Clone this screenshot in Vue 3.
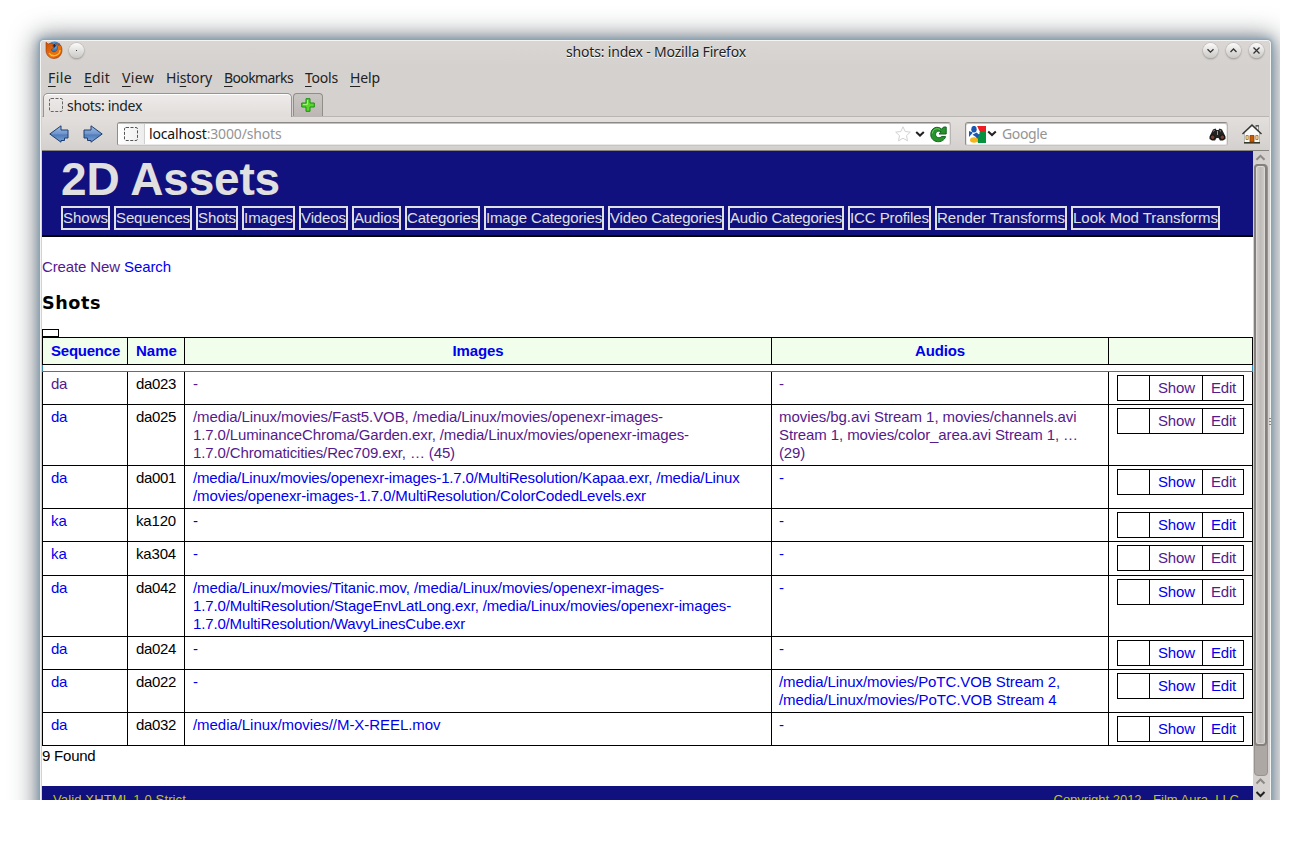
<script setup>
const fitText = (el, { value }) => {
  const chars = el.textContent.trim().length
  el.style.letterSpacing = '0px'
  const natural = el.getBoundingClientRect().width
  el.style.letterSpacing = `${(value - natural) / Math.max(1, chars)}px`
}
const vFit = { mounted: fitText }

const menus = [
  { pre: '', key: 'F', post: 'ile', w: 24, box: 36 },
  { pre: '', key: 'E', post: 'dit', w: 26, box: 38 },
  { pre: '', key: 'V', post: 'iew', w: 32, box: 44 },
  { pre: 'Hi', key: 's', post: 'tory', w: 46, box: 58 },
  { pre: '', key: 'B', post: 'ookmarks', w: 69, box: 81 },
  { pre: '', key: 'T', post: 'ools', w: 33, box: 45 },
  { pre: '', key: 'H', post: 'elp', w: 30, box: 40 },
]
const nav = [
  ['Shows', 49], ['Sequences', 78], ['Shots', 42], ['Images', 53], ['Videos', 49],
  ['Audios', 49], ['Categories', 75], ['Image Categories', 120], ['Video Categories', 116],
  ['Audio Categories', 116], ['ICC Profiles', 83], ['Render Transforms', 132], ['Look Mod Transforms', 149],
]
const none = [['-', 5]]
const rows = [
  { seq: 'da', seqSeen: true, name: 'da023', images: none, audios: none, seen: true, show: true, edit: true, h: 33 },
  { seq: 'da', name: 'da025', seen: true, show: true, edit: true, h: 61,
    images: [['/media/Linux/movies/Fast5.VOB, /media/Linux/movies/openexr-images-', 470], ['1.7.0/LuminanceChroma/Garden.exr, /media/Linux/movies/openexr-images-', 496], ['1.7.0/Chromaticities/Rec709.exr, … (45)', 262]],
    audios: [['movies/bg.avi Stream 1, movies/channels.avi', 297.5], ['Stream 1, movies/color_area.avi Stream 1, …', 299], ['(29)', 26]] },
  { seq: 'da', name: 'da001', edit: true, h: 43, audios: none,
    images: [['/media/Linux/movies/openexr-images-1.7.0/MultiResolution/Kapaa.exr, /media/Linux', 546.5], ['/movies/openexr-images-1.7.0/MultiResolution/ColorCodedLevels.exr', 453]] },
  { seq: 'ka', name: 'ka120', images: none, audios: none, h: 33 },
  { seq: 'ka', name: 'ka304', images: none, audios: none, show: true, edit: true, h: 34 },
  { seq: 'da', name: 'da042', edit: true, h: 61, audios: none,
    images: [['/media/Linux/movies/Titanic.mov, /media/Linux/movies/openexr-images-', 471], ['1.7.0/MultiResolution/StageEnvLatLong.exr, /media/Linux/movies/openexr-images-', 538], ['1.7.0/MultiResolution/WavyLinesCube.exr', 272]] },
  { seq: 'da', name: 'da024', images: none, audios: none, h: 33 },
  { seq: 'da', name: 'da022', images: none, h: 43,
    audios: [['/media/Linux/movies/PoTC.VOB Stream 2,', 281], ['/media/Linux/movies/PoTC.VOB Stream 4', 277.5]] },
  { seq: 'da', name: 'da032', audios: none, h: 33, images: [['/media/Linux/movies//M-X-REEL.mov', 247.5]] },
]
</script>

<template>
  <div class="desktop">
    <div class="window">
      <div class="titlebar">
        <svg class="fox" width="18" height="18" viewBox="0 0 18 18">
          <defs>
            <radialGradient id="globe" cx=".5" cy=".3" r=".7"><stop offset="0" stop-color="#7cc4ee" /><stop offset=".6" stop-color="#2a66a8" /><stop offset="1" stop-color="#16305e" /></radialGradient>
            <linearGradient id="fur" x1="0" y1="0" x2="1" y2="1"><stop offset="0" stop-color="#c94f0b" /><stop offset=".6" stop-color="#ea7410" /><stop offset="1" stop-color="#c84506" /></linearGradient>
          </defs>
          <circle cx="9.500" cy="7.500" r="7" fill="url(#globe)" />
          <path d="M1 1.200 3.200 3C5 2 7 2 8.600 3L7 5l1.800.9-.2 1.200L6.400 8.300C6.200 10 7.800 11.200 9.600 10.900c1.400-.3 2.300-1.400 2.600-2.300.8-2-.1-4.700-1.800-6.600 2 .6 3 1.600 3.600 2.700l.1-1.900c2 1.600 2.900 3.600 2.900 6.200 0 5-3.600 8.500-8 8.500S1 14.200 1 9.300z" fill="url(#fur)" stroke="#a03806" stroke-width=".6" />
          <path d="M4 12c1.500 2.400 4.300 3.200 7 2.300 2.600-.9 4-3 4-5.300" fill="none" stroke="#ffbe32" stroke-width="1.300" />
          <path d="M8 4l2-1.500 1 2.500-2 2z" fill="#14284e" />
        </svg>
        <span class="orb"><svg width="15" height="15"><rect x="7" y="7" width="1" height="1" fill="#333" stroke="none" /></svg></span>
        <span class="title"><span v-fit="180" class="fit">shots: index - Mozilla Firefox</span></span>
        <span class="orb"><svg width="15" height="15"><path d="M4.500 6.200l3 3 3-3" /></svg></span>
        <span class="orb"><svg width="15" height="15"><path d="M4.500 9l3-3 3 3" /></svg></span>
        <span class="orb"><svg width="15" height="15"><path d="M4.500 4.500l6 6m0-6l-6 6" /></svg></span>
      </div>
      <div class="menubar">
        <span v-for="m in menus" :key="m.post" class="menu" :style="{ width: m.box + 'px' }"><span v-fit="m.w" class="fit">{{ m.pre }}<span class="key">{{ m.key }}</span>{{ m.post }}</span></span>
      </div>
      <div class="tabs">
        <div class="tab"><svg width="14" height="14"><rect x=".5" y=".5" width="13" height="13" rx="1.500" fill="none" stroke="#666" stroke-dasharray="3 1.500" /></svg><span v-fit="75" class="fit">shots: index</span></div>
        <div class="plus">
          <svg width="14" height="14"><path d="M5 .7h4V5h4.300v4H9v4.300H5V9H.7V5H5z" fill="#5bd42c" stroke="#179012" /><path d="M6.500 2v4.500H2" fill="none" stroke="#a5ee7e" /></svg>
        </div>
      </div>
      <div class="toolbar">
        <svg class="arrow" width="20" height="18" viewBox="0 0 20 18"><defs><linearGradient id="blue" x1="0" y1="0" x2="0" y2="1"><stop offset="0" stop-color="#a3bfe6" /><stop offset=".5" stop-color="#6d94cc" /><stop offset=".55" stop-color="#4f7cba" /><stop offset="1" stop-color="#7ca3d8" /></linearGradient></defs><path d="M.8 9 12 .8V5h7v8h-3.500v2.500H12v1.700z" fill="url(#blue)" stroke="#1d3f70" /></svg>
        <svg class="arrow next" width="20" height="18" viewBox="0 0 20 18"><path d="M19.200 9 8 .8V5H1v8h3.500v2.500H8v1.700z" fill="url(#blue)" stroke="#1d3f70" /></svg>
        <div class="field address">
          <span class="ident"><svg width="14" height="14"><rect x=".5" y=".5" width="13" height="13" rx="1.500" fill="none" stroke="#555" stroke-dasharray="3 1.500" /></svg></span>
          <span v-fit="132.500" class="fit url">localhost<span class="dim">:3000/shots</span></span>
          <svg class="star" width="16" height="16" viewBox="0 0 16 16"><path d="M8 .8l2.200 4.700 5.100.6-3.800 3.500 1 5.200L8 12.200l-4.500 2.600 1-5.200L.7 6.100l5.100-.6z" fill="#fff" stroke="#d2d2d2" /></svg>
          <svg width="10" height="8"><path d="M1.200 2l3.800 3.600L8.800 2" fill="none" stroke="#222" stroke-width="2" /></svg>
          <svg class="reload" width="17" height="17" viewBox="0 0 17 17"><path d="M11.800 3.200 13.500 1h2.700v7H9l2-2.300C8 4.200 5.600 5.800 5.600 8.500c0 3.200 3.900 4.200 6 2.100h4C13.200 18.300.8 17 .8 8.500.8 1.500 7.500-.6 11.800 3.200z" fill="#27952b" stroke="#10621b" /><path d="M2.200 7.500C3 3 7 1.600 10 3.500" fill="none" stroke="#6ccb60" /></svg>
        </div>
        <div class="field search">
          <svg width="17" height="17" viewBox="0 0 17 17"><path d="M8 0h9v6H11z" fill="#ee1c23" /><path d="M8 6h9v11H9l-2-6z" fill="#07923f" /><path d="M0 5l4 1.500L0 11z" fill="#1b56b3" /><path d="M8 0H3v6l5 4 3-3-2-2z" fill="#fff" /><ellipse cx="5" cy="3.200" rx="2.700" ry="3.300" fill="#1b56b3" /><path d="M3.500 8.800l4-2.300L10.500 9 8.500 12z" fill="#1b56b3" /><ellipse cx="5" cy="14" rx="4" ry="2.700" fill="#f4b41b" /></svg>
          <svg class="drop" width="10" height="8"><path d="M1.200 1.500l3.800 3.600L8.800 1.500" fill="none" stroke="#222" stroke-width="2" /></svg>
          <span v-fit="45" class="fit dim google">Google</span>
          <svg width="17" height="13" viewBox="0 0 17 13"><path d="M4 1.500 6.500.5l1 1.500h2l1-1.500L13 1.500l3.500 7v2.500L14 12.500h-3L9.500 10h-2L6 12.500H3L.5 11V8.500z" fill="#222" /><circle cx="3.700" cy="9.200" r="2.300" fill="#73422f" stroke="#111" /><circle cx="13.300" cy="9.200" r="2.300" fill="#73422f" stroke="#111" /><path d="M4.500 3.500l1-1.500m6 1.500l-.5-1.500M8.500 3v4" stroke="#999" fill="none" /></svg>
        </div>
        <svg class="home" width="20" height="20" viewBox="0 0 20 20"><path d="M14 2h2.500v5H14z" fill="#eee" stroke="#555" stroke-width=".6" /><path d="M13.500 1.800h3.500" stroke="#333" /><path d="M2.500 8.500 10 2l7.500 6.500v10h-15z" fill="#f9f9f7" stroke="#999" stroke-width=".6" /><path d="M.5 10 10 1l9.500 9" fill="none" stroke="#333" stroke-width="1.400" /><path d="M2 18.800h16" stroke="#333b28" stroke-width="1.600" /><path d="M8 11.500h4v6.500H8z" fill="#c65a07" stroke="#8a3c04" stroke-width=".8" /><path d="M4 11.500h2.200v4H4zm9.800 0H16v4h-2.200z" fill="#f9e6b0" stroke="#a87632" stroke-width=".9" /></svg>
      </div>
      <div class="viewport">
        <div class="page">
          <header>
            <h1><span v-fit="219" class="fit">2D Assets</span></h1>
            <nav><a v-for="[label, w] in nav" :key="label" :style="{ width: w + 'px' }"><span v-fit="w - 4" class="fit">{{ label }}</span></a></nav>
          </header>
          <p class="links"><span v-fit="78" class="fit seen">Create New</span><span v-fit="47" class="fit">Search</span></p>
          <h2><span v-fit="59" class="fit">Shots</span></h2>
          <div class="stub"></div>
          <div class="row head">
            <div><span v-fit="69" class="fit">Sequence</span></div>
            <div><span v-fit="41" class="fit">Name</span></div>
            <div class="mid"><span v-fit="51" class="fit">Images</span></div>
            <div class="mid"><span v-fit="50" class="fit">Audios</span></div>
            <div></div>
          </div>
          <div class="gap"></div>
          <div v-for="(r, i) in rows" :key="i" class="row" :style="{ height: r.h + 'px' }">
            <div><span v-fit="16" class="fit" :class="{ seen: r.seqSeen }">{{ r.seq }}</span></div>
            <div><span v-fit="40" class="fit plain">{{ r.name }}</span></div>
            <div :class="{ seen: r.seen }"><span v-for="[t, w] in r.images" :key="t" v-fit="w" class="fit line">{{ t }}</span></div>
            <div class="audio" :class="{ seen: r.seen }"><span v-for="[t, w] in r.audios" :key="t" v-fit="w" class="fit line">{{ t }}</span></div>
            <div class="last">
              <div class="actions">
                <span></span>
                <span :class="{ seen: r.show }"><span v-fit="37" class="fit">Show</span></span>
                <span :class="{ seen: r.edit }"><span v-fit="25" class="fit">Edit</span></span>
              </div>
            </div>
          </div>
          <p class="found"><span v-fit="53.500" class="fit">9 Found</span></p>
          <footer><span v-fit="133" class="fit">Valid XHTML 1.0 Strict</span><span v-fit="185.500" class="fit">Copyright 2012 - Film Aura, LLC</span></footer>
        </div>
        <div class="scroll">
          <svg class="up" width="16" height="13"><path d="M3.500 8.800l4-4 4 4" /></svg>
          <div class="track"><div class="thumb"></div></div>
          <svg width="16" height="12"><path d="M3.500 7.500l4-4 4 4" /></svg>
          <svg class="down" width="16" height="12"><path d="M3.500 4l4 4 4-4" /></svg>
        </div>
        <div class="grip"><i></i><i></i><i></i></div>
      </div>
    </div>
  </div>
</template>

<style>
html, body { margin: 0; background: #fff; overflow: hidden; }
</style>

<style scoped>
.desktop { width: 1280px; height: 800px; overflow: hidden; font: 15px/18px "Liberation Sans", Arial, sans-serif; color: #000; }
.desktop * { box-sizing: border-box; }
.fit { display: inline-block; white-space: nowrap; }
.window { width: 1231px; height: 790px; margin: 40px 0 0 40px; padding: 0 1px; display: flex; flex-direction: column; background: #d5d1ce; border: 1px solid #f5f4f3; border-bottom: 0; border-radius: 4px 4px 0 0; box-shadow: 0 0 2px 1px #80a9c0, 0 0 9px 2px rgba(95, 135, 160, .55), 0 0 24px 5px rgba(60, 65, 70, .6); }
.titlebar, .menubar, .tabs, .toolbar { font-family: "Noto Sans", "Open Sans", sans-serif; font-size: 14px; color: #222; flex: none; display: flex; }
.titlebar { height: 26px; background: linear-gradient(#d9d6d3, #d5d1ce); padding: 1px 5px 0 3px; gap: 8px; }
.fox { margin-right: -2px; margin-top: -1px; }
.orb { width: 15px; height: 15px; margin-top: 1px; border-radius: 50%; background: linear-gradient(#fbfbfb, #cbc8c5); box-shadow: 0 0 0 .5px #bbb7b4, 0 1px 2px #888; }
.orb svg { display: block; fill: none; stroke: #333; stroke-width: 1.300; }
.title { flex: 1; text-align: center; padding: 1px 0 0 25px; text-shadow: 0 1px 0 #fff; }
.menubar { height: 26px; padding: 2px 0 0 6px; }
.key { text-decoration: underline; text-underline-offset: 3px; text-decoration-thickness: 1px; text-decoration-skip-ink: none; }
.tabs { height: 24px; border-bottom: 1px solid #b9b5b2; }
.tab { width: 249px; height: 24px; margin-left: 1px; padding: 3px 5px; display: flex; gap: 4px; background: linear-gradient(#eeebea, #e0dddb); border: 1px solid #97938f; border-bottom: 0; border-radius: 5px 5px 0 0; line-height: 17px; box-shadow: inset 0 1px 0 #fff; }
.tab svg { margin-top: 1px; }
.plus { width: 30px; height: 23px; margin-left: 1px; padding: 4px 7px; border: 1px solid #918d89; border-bottom: 0; border-radius: 4px 4px 0 0; background: linear-gradient(#c9c5c2, #bcb7b4); }
.toolbar { height: 34px; padding: 5px 6px 5px 7px; border-bottom: 1px solid #878480; background: linear-gradient(#e2dfdd, #d4d0cd); }
.arrow { margin-top: 3px; }
.next { margin-left: 14px; }
.field { height: 24px; display: flex; align-items: center; background: #fff; border: 1px solid; border-color: #8d8986 #b9b5b2 #c8c4c1 #908c89; border-radius: 3px; box-shadow: inset 0 1px 0 #c4c0bd, inset 0 0 0 1px #ebe9e8; }
.address { width: 834px; margin-left: 14px; padding-right: 3px; }
.ident { width: 27px; height: 20px; padding: 3px 0 0 6px; margin-right: 4px; background: linear-gradient(90deg, #fff, #ededed); border-right: 1px solid #d0d0d0; }
.ident svg { display: block; }
.url { margin-right: auto; color: #111; }
.dim { color: #949494; }
.star { margin-right: 4px; }
.reload { margin-left: 5px; }
.search { width: 263px; margin-left: 14px; padding: 0 1px 0 3px; }
.drop { margin: 0 5px 0 1px; }
.google { margin-right: auto; }
.home { margin: 2px 0 0 14px; }
.viewport { display: flex; height: 680px; position: relative; }
.page { width: 1211px; flex: none; background: #fff; color: #0000ee; }
.seen { color: #551a8b; }
header { height: 86px; padding: 2px 0 0 19px; background: #10107f; border-bottom: 2px solid #000; color: #e0e0e0; }
h1 { margin: 0; height: 53px; font-size: 46px; line-height: 52px; }
nav { display: flex; gap: 4px; }
nav a { height: 24px; border: 2px solid #e0e0e0; line-height: 19px; }
.links { margin: 21px 0 0; height: 18px; display: flex; gap: 4px; }
h2 { margin: 16px 0 0; height: 22px; font: bold 17.600px/22px "DejaVu Sans", sans-serif; color: #000; }
.stub { width: 17px; height: 8px; margin-top: 15px; border: 1px solid #000; }
.row { display: grid; grid-template-columns: 85px 57px 587px 337px 145px; border-bottom: 1px solid #000; border-right: 1px solid #000; width: 1211px; }
.row > div { border-left: 1px solid #000; padding: 3px 0 0 8px; min-width: 0; }
.row > .audio { padding-left: 7px; }
.head { height: 28px; border-top: 1px solid #000; background: #f1feeb; font-weight: bold; }
.row.head > div { padding-top: 4px; }
.row.head > .mid { padding-left: 0; text-align: center; }
.plain { color: #000; }
.line { display: block; width: max-content; }
.gap { height: 7px; border: 1px solid #2f7fa3; border-top: 0; }
.actions { display: grid; grid-template-columns: 32px 53px 42px; width: 127px; height: 26px; border: 1px solid #000; border-left: 0; }
.actions > span { border-left: 1px solid #000; padding: 3px 0 0 8px; }
.found { margin: 1px 0 0; color: #000; height: 39px; }
footer { height: 45px; padding: 5px 14px 0 11px; display: flex; justify-content: space-between; background: #10107f; color: #c4c410; font-size: 13px; }
.scroll { width: 16px; background: #d5d1ce; display: flex; flex-direction: column; }
.scroll svg { display: block; fill: none; stroke: #8c8885; stroke-width: 2; flex: none; }
.track { width: 14px; height: 612px; margin-left: 1px; border-radius: 4px; background: #aea8a4; border: 1px solid #99938f; }
.thumb { width: 13px; height: 582px; margin: -1px 0 0 -1px; border: 2px solid #83807d; border-radius: 4px; background: linear-gradient(90deg, #d2cfcd, #bfbbb8 50%, #d0cdca); box-shadow: inset 0 0 0 1px #dbd8d6; }
.scroll .down { stroke: #222; }
.grip { position: absolute; left: 1227px; top: 267px; display: grid; gap: 2px; }
.grip i { width: 2px; height: 1px; background: #898683; }
</style>
